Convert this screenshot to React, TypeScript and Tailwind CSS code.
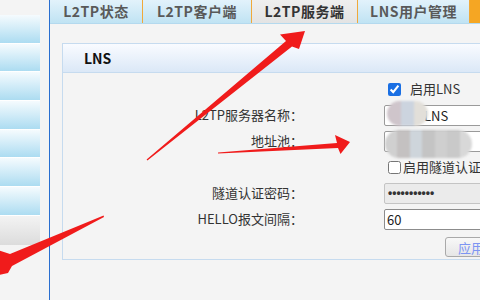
import React from "react";

const SIDE_ROWS = 7;

const TABS = [
  { label: "L2TP状态", width: "w-[93px]", active: false },
  { label: "L2TP客户端", width: "w-[109px]", active: false },
  { label: "L2TP服务端", width: "w-[106px]", active: true },
  { label: "LNS用户管理", width: "w-[112px]", active: false },
];

function Sidebar() {
  return (
    <div className="flex w-[40px] shrink-0 flex-col pt-[15px]">
      {Array.from({ length: SIDE_ROWS }).map((_, i) => (
        <div
          key={i}
          className="h-[28.7px] border-b border-white bg-gradient-to-b from-[#f5fbfe] to-[#acdcf1]"
        />
      ))}
      <div className="h-[29px] bg-gradient-to-b from-[#f3f3f3] to-[#dcdcdc]" />
    </div>
  );
}

function TabBar() {
  return (
    <div className="flex h-[24px] border-b border-[#b4d9ee] bg-gradient-to-b from-[#e2f2fb] to-[#c0e3f3]">
      {TABS.map((tab) => (
        <div
          key={tab.label}
          className={
            tab.active
              ? `${tab.width} flex shrink-0 items-center justify-center border-r border-[#f0a93a] bg-gradient-to-b from-[#efefef] to-[#e3e3e3] text-[14px] font-bold tracking-[0.5px] text-[#333]`
              : `${tab.width} flex shrink-0 items-center justify-center border-r border-[#f0a93a] text-[14px] font-bold tracking-[0.5px] text-[#595959]`
          }
        >
          {tab.label}
        </div>
      ))}
      <div className="w-[20px] shrink-0 bg-[#f5a623]" />
    </div>
  );
}

// pixelated redaction patches laid over the inputs
function Mosaic({ cells, className }: { cells: string[]; className: string }) {
  return (
    <div className={`absolute flex overflow-hidden rounded-full blur-[1px] ${className}`}>
      {cells.map((c, i) => (
        <div key={i} className="flex-1" style={{ background: c }} />
      ))}
    </div>
  );
}

function FormRow({ label, children }: { label?: string; children: React.ReactNode }) {
  return (
    <div className="flex h-[26px] items-center">
      <div className="w-[240px] shrink-0 text-right">{label}</div>
      <div className="relative flex items-center pl-[81px]">{children}</div>
    </div>
  );
}

function Panel() {
  return (
    <div className="ml-[12px] mt-[19px] w-[480px] border border-[#c6dbef]">
      <div className="flex h-[29px] items-center border-b border-[#c6dbef] bg-gradient-to-b from-[#f9fbff] to-[#dbe8f7] pl-[21px] text-[14px] font-bold text-[#111]">
        LNS
      </div>
      <div className="pb-[2px] pt-[3px]">
        <FormRow>
          <label className="ml-[4px] flex items-center">
            <input type="checkbox" defaultChecked className="h-[13px] w-[13px] accent-[#1a6fe3]" />
            <span className="ml-[9px]">启用LNS</span>
          </label>
        </FormRow>
        <FormRow label="L2TP服务器名称：">
          <input
            readOnly
            value="LNS"
            className="h-[21px] w-[200px] rounded-[2px] border border-[#9a9a9a] bg-white pl-[39px] text-[13px] text-[#222] outline-none"
          />
          <Mosaic
            className="left-[84px] top-[-4px] h-[25px] w-[41px]"
            cells={["#cfc5cb", "#ccd4df", "#e2dfd9"]}
          />
        </FormRow>
        <FormRow label="地址池：">
          <input
            readOnly
            value=""
            className="h-[21px] w-[200px] rounded-[2px] border border-[#9a9a9a] bg-white text-[13px] outline-none"
          />
          <Mosaic
            className="left-[82px] top-[-1px] h-[28px] w-[87px]"
            cells={["#d0d0d0", "#c4c1c1", "#ced5db", "#c4c4c4", "#cfcfcf", "#c9c9c9", "#d8d8d8"]}
          />
        </FormRow>
        <FormRow>
          <label className="ml-[4px] flex items-center">
            <input type="checkbox" className="h-[13px] w-[13px]" />
            <span className="ml-[2px]">启用隧道认证</span>
          </label>
        </FormRow>
        <FormRow label="隧道认证密码：">
          <div className="flex h-[21px] w-[200px] items-center rounded-[2px] border border-[#c4c4c4] bg-[#ebebeb] pl-[3px] font-['Liberation_Sans',sans-serif] text-[12px] font-bold text-[#333]">
            •••••••••••
          </div>
        </FormRow>
        <FormRow label="HELLO报文间隔：">
          <input
            readOnly
            value="60"
            className="h-[21px] w-[200px] rounded-[2px] border border-[#8c8c8c] bg-white pl-[2px] text-[13px] text-[#222] outline-none"
          />
        </FormRow>
        <div className="mt-[5px] flex pl-[382px]">
          <button
            type="button"
            className="h-[20px] w-[60px] rounded-[3px] border border-[#a9a9a9] bg-gradient-to-b from-[#f8f8f8] to-[#e6e6e6] pl-[12px] text-left text-[13px] text-[#7d95f3]"
          >
            应用
          </button>
        </div>
      </div>
    </div>
  );
}

function Arrows() {
  return (
    <svg className="pointer-events-none absolute inset-0" width="480" height="300" viewBox="0 0 480 300">
      <g fill="#f01b1b">
        <polygon points="147.4,160.6 292,46.5 299,49 305,31 280,34.5 286,41 146.6,159.6" />
        <polygon points="218,153.6 338,148 340.5,154 350,142 335,135 337,143 218,152.6" />
        <polygon points="104,217 12,266 8,273 -22,280 -2,250 10,254 103.6,215.6" />
      </g>
    </svg>
  );
}

export default function App() {
  return (
    <div className="relative flex h-[300px] w-[480px] overflow-hidden bg-[#f4f4f4] font-['Noto_Sans_CJK_SC',sans-serif] text-[13px] text-[#333]">
      <Sidebar />
      <div className="ml-[9px] min-w-0 flex-1 overflow-hidden border-l border-[#2a6fd0]">
        <TabBar />
        <Panel />
      </div>
      <Arrows />
    </div>
  );
}
